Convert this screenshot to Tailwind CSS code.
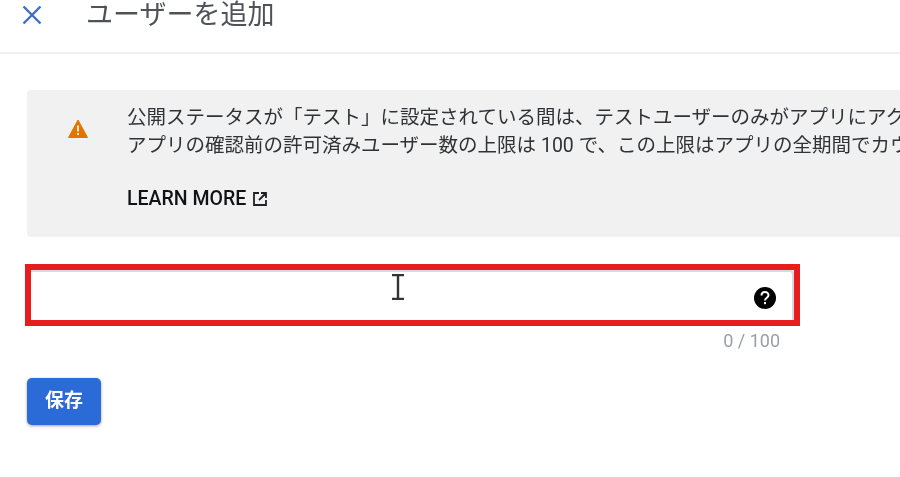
<!DOCTYPE html>
<html lang="ja">
  <head>
    <meta charset="UTF-8" />
    <script src="https://cdn.jsdelivr.net/npm/@tailwindcss/browser@4"></script>
    <title>ユーザーを追加</title>
  </head>
  <body class="bg-white">
    <div class="w-[900px] h-[477px] overflow-hidden blur-[0.5px] font-['Roboto','Noto_Sans_CJK_JP',sans-serif]">
      <div class="h-[54px] border-b-2 border-[#f0f0f0] flex items-start">
        <svg class="ml-[21px] mt-[4px] w-[22px] h-[22px]" viewBox="0 0 22 22" fill="none" stroke="#3f6fc0" stroke-width="2.4"><path d="M2.5 2.5 L19.5 19.5 M19.5 2.5 L2.5 19.5" /></svg>
        <h1 class="ml-[43px] text-[27px] leading-[30px] font-normal text-[#4f5357] whitespace-nowrap">ユーザーを追加</h1>
      </div>

      <div class="ml-[27px] mt-[36px] w-[900px] h-[147px] bg-[#f1f1f1] rounded-[4px] flex">
        <svg class="ml-[41px] mt-[29px] w-[20px] h-[19px] shrink-0" viewBox="0 0 20 19"><path d="M10 1 L19.5 18.5 L0.5 18.5 Z" fill="#e37400" stroke="#e37400" stroke-linejoin="round" /><rect x="9" y="6.5" width="2" height="6" fill="#f8e6d0" /><rect x="9" y="14" width="2" height="2" fill="#f8e6d0" /></svg>
        <div class="ml-[39px] pt-[14px] min-w-0">
          <p class="text-[19.5px] leading-[28px] text-[#303336] whitespace-nowrap">公開ステータスが「テスト」に設定されている間は、テストユーザーのみがアプリにアクセスできます。</p>
          <p class="text-[19.5px] leading-[28px] text-[#303336] whitespace-nowrap">アプリの確認前の許可済みユーザー数の上限は 100 で、この上限はアプリの全期間でカウントされます。</p>
          <a class="mt-[27px] flex items-center gap-[6px] text-[19.5px] leading-[24px] font-medium text-[#111315]">LEARN MORE
            <svg class="w-[16px] h-[16px]" viewBox="0 0 16 16" fill="none" stroke="#202124" stroke-width="1.8"><path d="M7 2 H2 V14 H14 V9 M9 2 H14 V7 M14 2 L7 9" /></svg>
          </a>
        </div>
      </div>

      <div class="relative ml-[25px] mt-[27px] w-[775px] h-[62px] border-[6px] border-[#e81c1c]">
        <div class="h-full border-t-2 border-r-2 border-[#dadada] rounded-tr-[4px] flex items-center justify-end pr-[16px] pt-[4px]">
          <svg class="w-[22px] h-[22px]" viewBox="0 0 22 22"><circle cx="11" cy="11" r="11" fill="#000" /><path d="M7.5 8.5 C7.5 3.8 14.5 3.8 14.5 8.3 C14.5 10.8 11 10.8 11 13.5" fill="none" stroke="#fff" stroke-width="2" /><rect x="10" y="15" width="2" height="2.2" fill="#fff" /></svg>
        </div>
        <svg class="absolute left-[359px] top-[4px] w-[16px] h-[26px]" viewBox="0 0 16 26" fill="none" stroke="#333" stroke-width="2.4"><path d="M2 1 H14 M8 1 V25 M2 25 H14" /></svg>
      </div>

      <p class="w-[780px] mt-[5px] text-right text-[18px] leading-[20px] text-[#9aa0a6]">0 / 100</p>

      <button class="block ml-[27px] mt-[27px] w-[74px] h-[47px] rounded-[5px] bg-[#2b6bd8] shadow-[0_1px_3px_rgba(60,64,67,0.5)] text-white text-[19px] font-bold">保存</button>
    </div>
  </body>
</html>
